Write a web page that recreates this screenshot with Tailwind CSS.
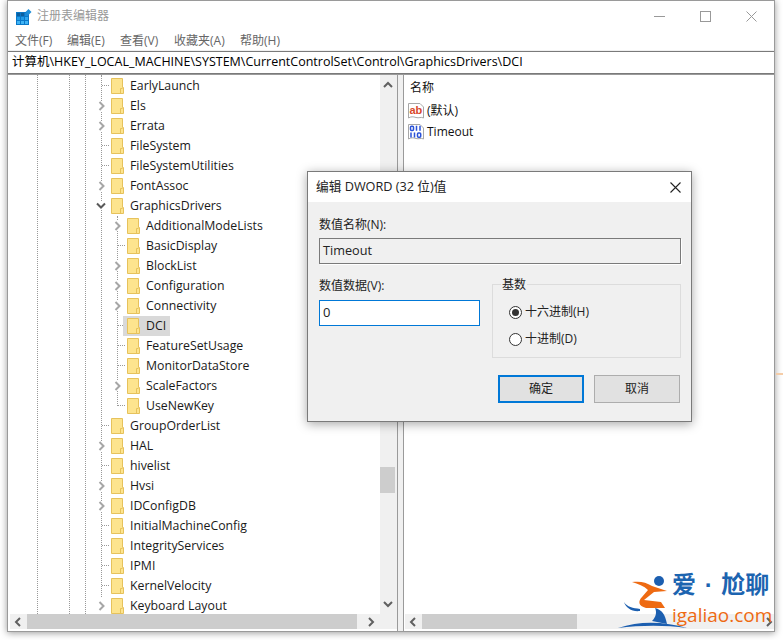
<!DOCTYPE html>
<html lang="zh-CN">
<head>
  <meta charset="UTF-8">
  <title>注册表编辑器</title>
  <script src="https://cdn.jsdelivr.net/npm/@tailwindcss/browser@4"></script>
</head>
<body class="bg-white">
  <svg class="hidden">
    <symbol id="folder" viewBox="0 0 13 16">
      <path d="M.5.5H11.5V9.5H12.5V15.5H.5Z" fill="#fde48e" stroke="#e6c25c"/>
      <path d="M9.5 15V10.5H11.5" fill="none" stroke="#e6c25c"/>
    </symbol>
    <symbol id="chev-r" viewBox="0 0 8 10"><path d="M1.5 1l4 4-4 4" fill="none" stroke="#a6a6a6" stroke-width="2"/></symbol>
    <symbol id="chev-d" viewBox="0 0 10 8"><path d="M1 1.5l4 4 4-4" fill="none" stroke="#595959" stroke-width="2"/></symbol>
    <symbol id="bar-l" viewBox="0 0 8 10"><path d="M6 1L2 5l4 4" fill="none" stroke="#606060" stroke-width="2"/></symbol>
    <symbol id="bar-r" viewBox="0 0 8 10"><path d="M2 1l4 4-4 4" fill="none" stroke="#606060" stroke-width="2"/></symbol>
    <symbol id="bar-u" viewBox="0 0 10 8"><path d="M1 6l4-4 4 4" fill="none" stroke="#606060" stroke-width="2"/></symbol>
    <symbol id="bar-d" viewBox="0 0 10 8"><path d="M1 2l4 4 4-4" fill="none" stroke="#606060" stroke-width="2"/></symbol>
  </svg>

  <div class="relative w-[783px] h-[640px] overflow-hidden bg-white font-['Open_Sans','Noto_Sans_CJK_SC',sans-serif] text-[12px] text-[#111]">
    <!-- main window -->
    <div class="ml-[7px] w-[768px] h-[632px] flex flex-col border border-[#9a9a9a] bg-white shadow-[0_1px_7px_rgba(0,0,0,0.4)]">
      <div class="h-[30px] flex items-center shrink-0">
        <svg class="ml-[8px] mt-[1px] w-[16px] h-[16px]" viewBox="0 0 16 16">
          <rect x="0" y="3" width="13" height="13" fill="#0a78c8"/>
          <rect x="1" y="4" width="3" height="3" fill="#0c5f9e"/><rect x="5" y="4" width="3" height="3" fill="#0c5f9e"/><rect x="9" y="4" width="3" height="3" fill="#1a8ad8"/>
          <rect x="1" y="8" width="3" height="3" fill="#1f9be8"/><rect x="5" y="8" width="3" height="3" fill="#1f9be8"/><rect x="9" y="8" width="3" height="3" fill="#2fa8f0"/>
          <rect x="1" y="12" width="3" height="3" fill="#3fb4f5"/><rect x="5" y="12" width="3" height="3" fill="#3fb4f5"/><rect x="9" y="12" width="3" height="3" fill="#3fb4f5"/>
          <path d="M12.5 0L15.5 3L12.5 6L9.5 3Z" fill="#1f8fd8"/>
        </svg>
        <span class="ml-[5px] text-[#999]">注册表编辑器</span>
        <div class="ml-auto flex items-center">
          <svg class="w-[11px] h-[11px] mr-[35px]" viewBox="0 0 11 11"><path d="M0 5.5H11" stroke="#999"/></svg>
          <svg class="w-[11px] h-[11px] mr-[35px]" viewBox="0 0 11 11"><rect x=".5" y=".5" width="10" height="10" fill="none" stroke="#999"/></svg>
          <svg class="w-[11px] h-[11px] mr-[17px]" viewBox="0 0 11 11"><path d="M.5.5l10 10M10.5.5l-10 10" stroke="#999"/></svg>
        </div>
      </div>
      <div class="h-[19px] flex items-center shrink-0 pl-[7px] text-[#666]">
        <span class="w-[52px]">文件(F)</span>
        <span class="w-[53px]">编辑(E)</span>
        <span class="w-[54px]">查看(V)</span>
        <span class="w-[66px]">收藏夹(A)</span>
        <span>帮助(H)</span>
      </div>
      <div class="h-[1px] bg-[#f0f0f0] shrink-0"></div>
      <div class="h-[23px] shrink-0 flex items-center pl-[4px] border-y border-[#7a7a7a] text-[12.5px] text-black whitespace-nowrap">计算机\HKEY_LOCAL_MACHINE\SYSTEM\CurrentControlSet\Control\GraphicsDrivers\DCI</div>

      <div class="flex-1 flex min-h-0 bg-[#f0f0f0]">
        <!-- tree pane -->
        <div class="w-[390px] flex flex-col border-t border-r border-[#9a9a9a] bg-white">
          <div class="flex flex-1 min-h-0">
            <div id="tree" class="relative flex-1 overflow-hidden pt-[1px]">
              <div class="absolute left-[29px] top-0 bottom-0 border-l border-dotted border-[#999]"></div>
              <div class="absolute left-[61px] top-0 bottom-0 border-l border-dotted border-[#999]"></div>
              <div class="absolute left-[77px] top-0 bottom-0 border-l border-dotted border-[#999]"></div>
              <div class="absolute left-[93px] top-0 h-[522px] border-l border-dotted border-[#999]"></div>
              <div class="absolute left-[109px] top-[141px] h-[190px] border-l border-dotted border-[#999]"></div>
            </div>
            <div class="w-[17px] bg-[#f0f0f0] flex flex-col items-center pr-[2px]">
              <svg class="w-[10px] h-[8px] mt-[6px]" viewBox="0 0 10 8"><use href="#bar-u"/></svg>
              <div class="w-[15px] h-[26px] mt-[378px] bg-[#cdcdcd]"></div>
              <svg class="w-[10px] h-[8px] mt-[107px]" viewBox="0 0 10 8"><use href="#bar-d"/></svg>
            </div>
          </div>
          <div class="h-[15px] ml-[2px] bg-[#f0f0f0] flex items-center shrink-0">
            <svg class="w-[8px] h-[10px] ml-[4px]" viewBox="0 0 8 10"><use href="#bar-l"/></svg>
            <div class="w-[330px] h-[15px] ml-[5px] bg-[#cdcdcd]"></div>
            <svg class="w-[8px] h-[10px] ml-[10px]" viewBox="0 0 8 10"><use href="#bar-r"/></svg>
          </div>
          <div class="h-[2px] bg-white shrink-0"></div>
        </div>
        <div class="w-[5px] shrink-0 border-t border-[#9a9a9a]"></div>
        <!-- values pane -->
        <div class="flex-1 flex flex-col border-t border-l border-[#9a9a9a] bg-white">
          <div class="flex-1 pl-[4px]">
            <div class="h-[24px] pl-[2px] pt-[1px] flex items-center">名称</div>
            <div class="h-[21px] flex items-center gap-[3px] mt-[1px]">
              <svg class="w-[16px] h-[16px]" viewBox="0 0 16 16">
                <path d="M.5.5H12L15.5 4V15C13 13.5 11 15.5 8 14.5S3 13.5.5 15Z" fill="#fff" stroke="#a8a8a8"/>
                <text x="1.5" y="11" font-family="Liberation Sans" font-size="11" font-weight="700" fill="#d8472a">ab</text>
              </svg>
              <span>(默认)</span>
            </div>
            <div class="h-[21px] flex items-center gap-[3px]">
              <svg class="w-[16px] h-[16px]" viewBox="0 0 16 16">
                <path d="M.5.5H12L15.5 4V15C13 13.5 11 15.5 8 14.5S3 13.5.5 15Z" fill="#fff" stroke="#a8a8a8"/>
                <g fill="none" stroke="#2a52d8" stroke-width="1.5">
                  <rect x="2.5" y="2.2" width="3" height="4.3" rx="1"/><path d="M8.5 1.8v5M12 1.8v5M3 8.5v5M6.5 8.5v5"/><rect x="9.5" y="9" width="3.2" height="4.2" rx="1"/>
                </g>
              </svg>
              <span>Timeout</span>
            </div>
          </div>
          <div class="h-[15px] ml-[1px] bg-[#f0f0f0] flex items-center shrink-0">
            <svg class="w-[8px] h-[10px] ml-[4px]" viewBox="0 0 8 10"><use href="#bar-l"/></svg>
            <div class="w-[155px] h-[15px] ml-[5px] bg-[#cdcdcd]"></div>
            <svg class="w-[8px] h-[10px] ml-[188px]" viewBox="0 0 8 10"><use href="#bar-r"/></svg>
          </div>
          <div class="h-[2px] bg-white shrink-0"></div>
        </div>
      </div>
    </div>

    <!-- orange line showing behind the window -->
    <div class="absolute left-[776px] top-[373px] w-[7px] h-[2px] bg-[#f5cda8]"></div>

    <!-- DWORD dialog -->
    <div class="absolute left-[307px] top-[171px] w-[385px] h-[251px] flex flex-col border border-[#7a7a7a] bg-[#f0f0f0] shadow-[0_2px_10px_rgba(0,0,0,0.35)]">
      <div class="h-[30px] bg-white flex items-center pl-[8px] pr-[10px] text-[12.7px] text-[#222] shrink-0">
        <span>编辑 DWORD (32 位)值</span>
        <svg class="ml-auto w-[11px] h-[11px]" viewBox="0 0 11 11"><path d="M.5.5l10 10M10.5.5l-10 10" stroke="#222" stroke-width="1.1"/></svg>
      </div>
      <div class="flex-1 flex flex-col pl-[11px] pr-[10px] text-[#222]">
        <div class="mt-[14px] h-[17px] flex items-center">数值名称(N):</div>
        <div class="mt-[5px] h-[26px] flex items-center pl-[3px] pb-[1px] border border-[#7a7a7a] text-[12.7px] shadow-[1px_1px_0_#fff]">Timeout</div>
        <div class="flex mt-[12px]">
          <div class="w-[173px] shrink-0">
            <div class="h-[17px] mt-[1px] flex items-center">数值数据(V):</div>
            <div class="mt-[6px] w-[161px] h-[26px] flex items-center pl-[3px] pb-[1px] border border-[#0078d7] bg-white text-[13px]">0</div>
          </div>
          <div class="relative mt-[8px] w-[189px] h-[74px] border border-[#dcdcdc] pl-[16px] pt-[20px]">
            <span class="absolute left-[8px] -top-[9px] h-[17px] px-px flex items-center bg-[#f0f0f0]">基数</span>
            <div class="h-[14px] flex items-center gap-[3px]">
              <span class="w-[13px] h-[13px] rounded-full border border-[#333] bg-white flex items-center justify-center"><span class="w-[7px] h-[7px] rounded-full bg-[#333]"></span></span>
              <span>十六进制(H)</span>
            </div>
            <div class="h-[14px] mt-[13px] flex items-center gap-[3px]">
              <span class="w-[13px] h-[13px] rounded-full border border-[#333] bg-white"></span>
              <span>十进制(D)</span>
            </div>
          </div>
        </div>
        <div class="flex mt-[17px] ml-[179px] gap-[10px]">
          <div class="w-[86px] h-[28px] flex items-center justify-center border-2 border-[#0078d7] bg-[#e1e1e1]">确定</div>
          <div class="w-[86px] h-[28px] flex items-center justify-center border border-[#adadad] bg-[#e1e1e1]">取消</div>
        </div>
      </div>
    </div>

    <!-- watermark -->
    <div class="absolute left-[616px] top-[572px] w-[160px] h-[60px]">
      <svg class="absolute left-0 top-0 w-[74px] h-[60px]" viewBox="0 0 74 60">
        <circle cx="43" cy="9" r="5" fill="#1c5fb0"/>
        <path d="M16 10C24 9 30 10 36 14L51 19L38 20L28 28L45 30L49 36L30 36C22 34 22 29 26 25L32 18C28 14 22 12 16 10Z" fill="#ee6a12"/>
        <path d="M8 30C11 35 17 36 24 37L24 39C16 40 10 36 8 30Z" fill="#1c5fb0"/>
        <path d="M39 36C46 38 49 42 51 52L36 49C40 45 41 40 39 36Z" fill="#1c5fb0"/>
        <path d="M2 56C25 48 50 50 71 56C50 53 25 53 2 56Z" fill="#1c5fb0"/>
      </svg>
      <div class="absolute left-[56px] top-0 whitespace-nowrap text-[24px] leading-[26px] [word-spacing:2px] font-bold text-[#1c64b0] font-['Liberation_Sans','Noto_Sans_CJK_SC',sans-serif]">爱 · 尬聊</div>
      <div class="absolute left-[56px] top-[29px] whitespace-nowrap text-[19px] leading-[28px] text-[#ee6a12] font-['Open_Sans',sans-serif]">igaliao.com</div>
    </div>
  </div>

  <script>
    // [name, level, kind] kind: l = leaf, c = collapsed, o = open
    const rows = [
      ['EarlyLaunch', 1, 'l'], ['Els', 1, 'c'], ['Errata', 1, 'c'], ['FileSystem', 1, 'l'],
      ['FileSystemUtilities', 1, 'l'], ['FontAssoc', 1, 'c'], ['GraphicsDrivers', 1, 'o'],
      ['AdditionalModeLists', 2, 'c'], ['BasicDisplay', 2, 'l'], ['BlockList', 2, 'c'],
      ['Configuration', 2, 'c'], ['Connectivity', 2, 'c'], ['DCI', 2, 'l'], ['FeatureSetUsage', 2, 'l'],
      ['MonitorDataStore', 2, 'l'], ['ScaleFactors', 2, 'c'], ['UseNewKey', 2, 'l'],
      ['GroupOrderList', 1, 'l'], ['HAL', 1, 'c'], ['hivelist', 1, 'l'], ['Hvsi', 1, 'c'],
      ['IDConfigDB', 1, 'c'], ['InitialMachineConfig', 1, 'l'], ['IntegrityServices', 1, 'l'],
      ['IPMI', 1, 'l'], ['KernelVelocity', 1, 'l'], ['Keyboard Layout', 1, 'c']
    ];
    const tree = document.getElementById('tree');
    rows.forEach(([name, level, kind]) => {
      let mark = '<div class="absolute left-[6px] top-[9px] w-[7px] border-t border-dotted border-[#999]"></div>';
      if (kind === 'c') mark = '<svg class="absolute left-[2px] top-[5px] w-[8px] h-[10px] bg-white"><use href="#chev-r"/></svg>';
      if (kind === 'o') mark = '<svg class="absolute left-0 top-[6px] w-[10px] h-[8px] bg-white"><use href="#chev-d"/></svg>';
      const selected = name === 'DCI' ? 'bg-[#d9d9d9]' : '';
      const indent = level === 1 ? 'pl-[88px]' : 'pl-[104px]';
      tree.insertAdjacentHTML('beforeend', `
        <div class="relative h-[20px] flex items-center ${indent}">
          <div class="relative w-[11px] h-[20px] shrink-0">${mark}</div>
          <div class="relative h-[20px] flex items-center gap-[6px] px-[4px] ${selected}">
            <svg class="w-[13px] h-[16px] shrink-0"><use href="#folder"/></svg>
            <span class="whitespace-nowrap text-[12.3px] text-[#1a1a1a]">${name}</span>
          </div>
        </div>`);
    });
  </script>
</body>
</html>
